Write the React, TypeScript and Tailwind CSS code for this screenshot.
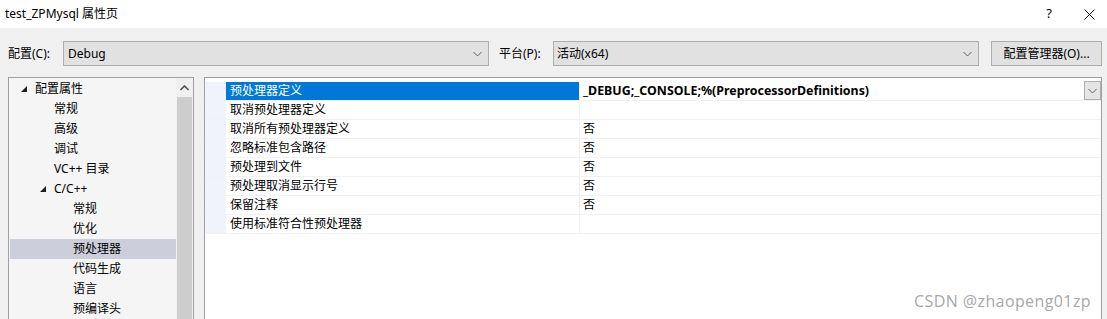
import React from "react";

const font = { fontFamily: '"Microsoft YaHei UI","Noto Sans","Noto Sans CJK SC",sans-serif' };

function Chevron({ up = false, color = "#606060" }: { up?: boolean; color?: string }) {
  return (
    <svg width="9" height="6" viewBox="0 0 9 6" className="block">
      <polyline
        points={up ? "0.5,5 4.5,1 8.5,5" : "0.5,1 4.5,5 8.5,1"}
        fill="none"
        stroke={color}
        strokeWidth={up ? 1.6 : 1}
      />
    </svg>
  );
}

function Tri() {
  return (
    <svg width="6" height="6" viewBox="0 0 6 6" className="block">
      <polygon points="6,0 6,6 0,6" fill="#1e1e1e" />
    </svg>
  );
}

type TreeItem = { label: string; level: number; expand?: boolean; selected?: boolean };

const tree: TreeItem[] = [
  { label: "配置属性", level: 0, expand: true },
  { label: "常规", level: 1 },
  { label: "高级", level: 1 },
  { label: "调试", level: 1 },
  { label: "VC++ 目录", level: 1 },
  { label: "C/C++", level: 1, expand: true },
  { label: "常规", level: 2 },
  { label: "优化", level: 2 },
  { label: "预处理器", level: 2, selected: true },
  { label: "代码生成", level: 2 },
  { label: "语言", level: 2 },
  { label: "预编译头", level: 2 },
];

const rows: { name: string; value: string; selected?: boolean }[] = [
  { name: "预处理器定义", value: "_DEBUG;_CONSOLE;%(PreprocessorDefinitions)", selected: true },
  { name: "取消预处理器定义", value: "" },
  { name: "取消所有预处理器定义", value: "否" },
  { name: "忽略标准包含路径", value: "否" },
  { name: "预处理到文件", value: "否" },
  { name: "预处理取消显示行号", value: "否" },
  { name: "保留注释", value: "否" },
  { name: "使用标准符合性预处理器", value: "" },
];

export default function App() {
  return (
    <div className="w-[1107px] h-[319px] overflow-hidden bg-[#f0f0f0] text-[12px] text-black flex flex-col" style={font}>
      {/* title bar */}
      <div className="h-[28px] bg-white flex items-center shrink-0">
        <div className="pl-[5px] text-[12px] leading-none">test_ZPMysql 属性页</div>
        <div className="flex-1" />
        <div className="w-[20px] text-center text-[13px] mr-[25px]">?</div>
        <svg width="11" height="11" viewBox="0 0 11 11" className="mr-[12px]">
          <path d="M0.5 0.5 L10.5 10.5 M10.5 0.5 L0.5 10.5" stroke="#111" strokeWidth="1" />
        </svg>
      </div>

      {/* toolbar */}
      <div className="h-[49px] shrink-0 flex items-start pt-[13px] pl-[8px]">
        <div className="h-[25px] flex items-center w-[55px]">配置(C):</div>
        <div className="w-[426px] h-[25px] border border-[#adadad] bg-[#e1e1e1] flex items-center pl-[4px] pr-[6px]">
          <span className="flex-1">Debug</span>
          <Chevron />
        </div>
        <div className="h-[25px] flex items-center ml-[10px] w-[54px]">平台(P):</div>
        <div className="w-[426px] h-[25px] border border-[#adadad] bg-[#e1e1e1] flex items-center pl-[3px] pr-[6px]">
          <span className="flex-1">活动(x64)</span>
          <Chevron />
        </div>
        <div className="ml-[12px] w-[111px] h-[25px] border border-[#adadad] bg-[#e1e1e1] flex items-center justify-center">
          配置管理器(O)...
        </div>
      </div>

      {/* panels */}
      <div className="flex-1 flex pl-[8px] min-h-0">
        {/* tree */}
        <div className="w-[186px] border border-[#a0a0a0] border-b-0 bg-[#f5f5f5] flex min-h-0">
          <div className="flex-1 flex flex-col pt-[1px] pl-[1px]">
            {tree.map((t, i) => (
              <div
                key={i}
                className={`h-[20px] shrink-0 flex items-center ${t.selected ? "bg-[#cccedb]" : ""}`}
                style={{ paddingLeft: t.level === 0 ? 11 : t.level === 1 ? (t.expand ? 30 : 44) : 63 }}
              >
                {t.expand && (
                  <span className="mr-[8px]">
                    <Tri />
                  </span>
                )}
                <span>{t.label}</span>
              </div>
            ))}
          </div>
          <div className="w-[17px] flex flex-col bg-[#f0f0f0]">
            <div className="h-[19px] flex items-center justify-center">
              <Chevron up color="#555" />
            </div>
            <div className="flex-1 mx-[1px] bg-[#cdcdcd]" />
          </div>
        </div>

        {/* property grid */}
        <div className="ml-[10px] w-[898px] border border-[#a0a0a0] border-b-0 bg-white pt-[4px]">
          {rows.map((r, i) => (
            <div key={i} className="h-[19px] flex border-b border-[#f0f0f5]">
              <div className="w-[21px] bg-[#f0f3f9]" />
              <div className={`w-[353px] flex items-center pl-[4px] ${r.selected ? "bg-[#0078d7] text-white" : ""}`}>
                {r.name}
              </div>
              <div className="w-[1px] bg-[#f0f0f5]" />
              <div className="flex-1 flex items-center pl-[3px]">
                <span
                  className={r.selected ? "font-bold text-[12.4px]" : ""}
                  style={r.selected ? { fontFamily: '"Segoe UI","Noto Sans",sans-serif' } : undefined}
                >
                  {r.value}
                </span>
                <div className="flex-1" />
                {r.selected && (
                  <div className="w-[17px] h-[19px] -mt-[1px] border border-[#adadad] bg-[#e5e5e5] flex items-center justify-center">
                    <Chevron />
                  </div>
                )}
              </div>
            </div>
          ))}
          <div className="flex justify-end pr-[10px] pt-[55px]">
            <span className="text-[16px] tracking-[0.4px] text-[#a8a8a8]" style={{ fontFamily: '"Open Sans","Noto Sans",sans-serif' }}>
              CSDN @zhaopeng01zp
            </span>
          </div>
        </div>
      </div>
    </div>
  );
}
